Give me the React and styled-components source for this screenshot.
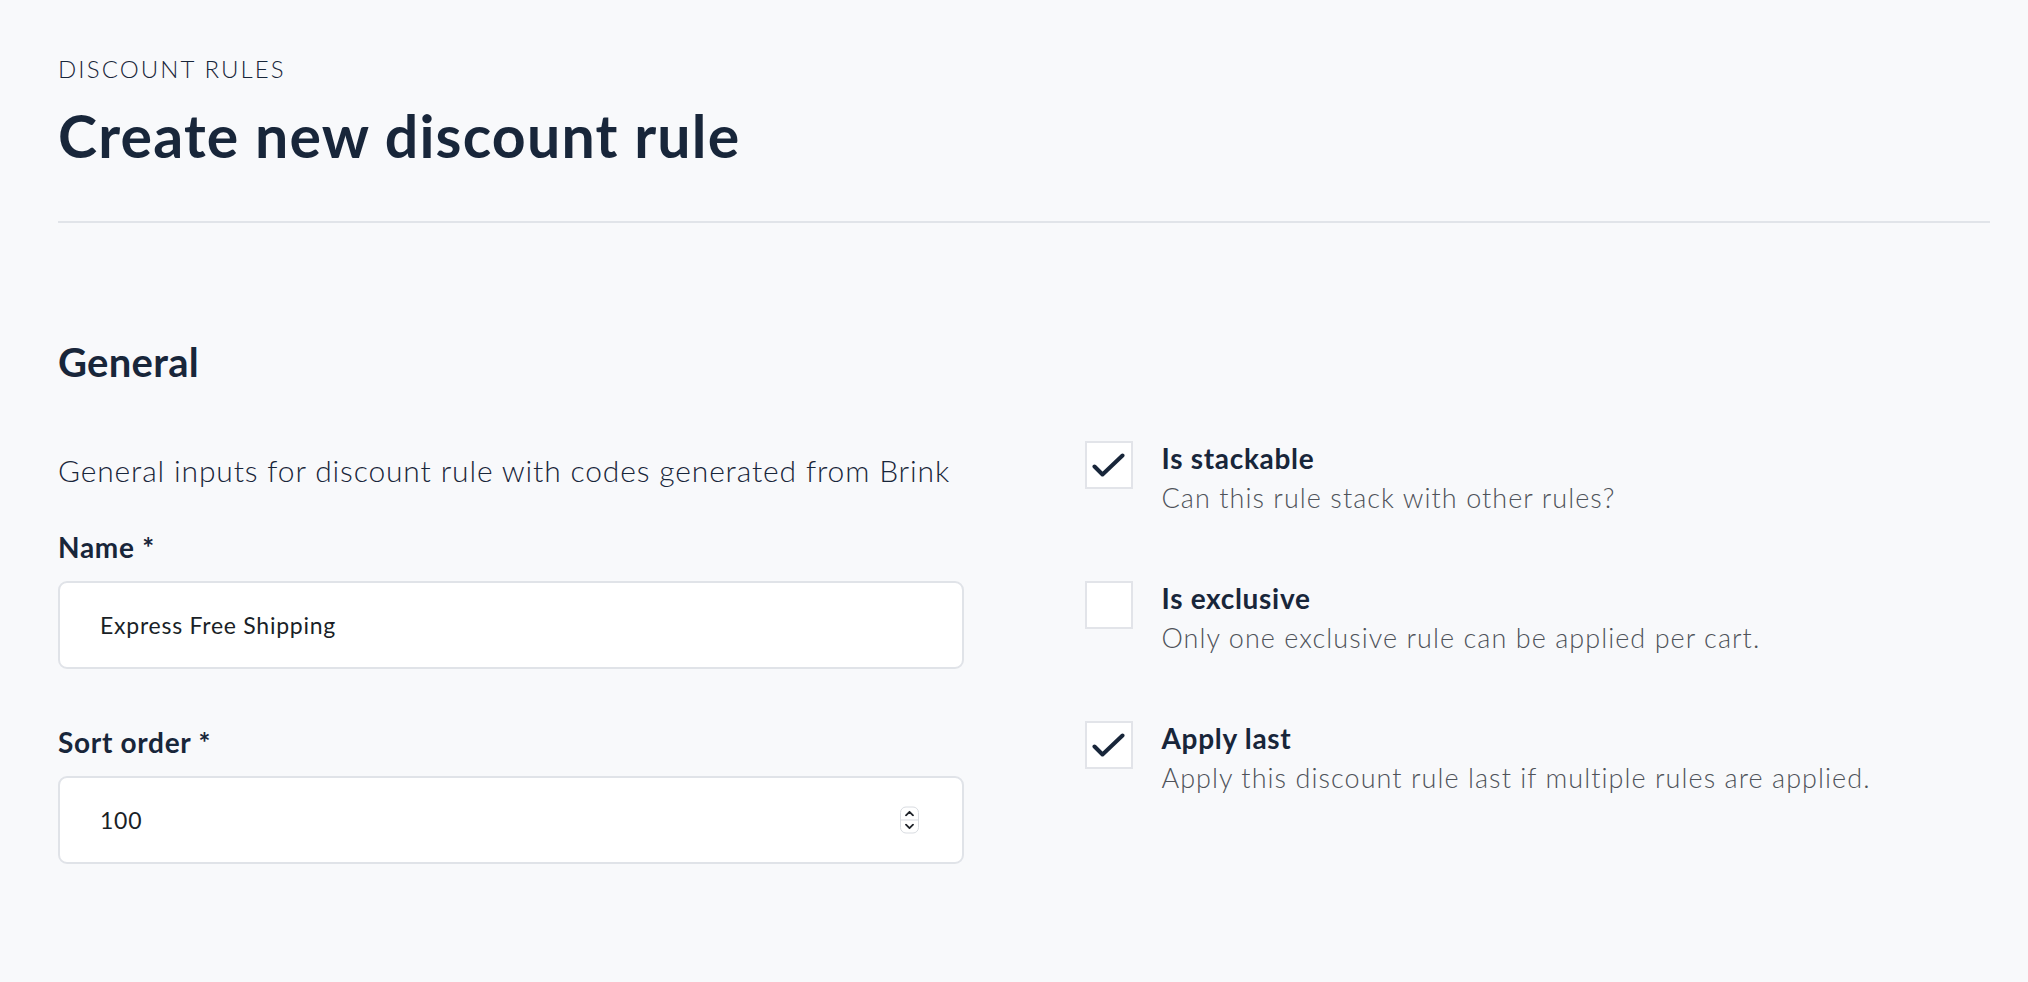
import React from 'react';
import styled, { createGlobalStyle } from 'styled-components';

const GlobalStyle = createGlobalStyle`
  html, body {
    margin: 0;
    padding: 0;
    background: #f8f9fb;
  }
  body {
    font-family: Lato, "Noto Sans", sans-serif;
    color: #18263a;
    -webkit-font-smoothing: antialiased;
  }
  * {
    box-sizing: border-box;
  }
`;

const Page = styled.div`
  min-height: 982px;
  padding: 0 38px 0 58px;
`;

const Header = styled.header`
  padding-top: 55px;
  padding-bottom: 52px;
  border-bottom: 2px solid #e1e4e9;
`;

const Breadcrumb = styled.div`
  font-size: 24px;
  font-weight: 300;
  letter-spacing: 2.1px;
  line-height: 28px;
  text-transform: uppercase;
`;

const Title = styled.h1`
  margin: 20px 0 0;
  font-size: 59px;
  font-weight: 700;
  letter-spacing: 1.2px;
  line-height: 66px;
`;

const Section = styled.section`
  padding-top: 115px;
`;

const SectionTitle = styled.h2`
  margin: 0 0 55px;
  font-size: 40px;
  font-weight: 700;
  letter-spacing: 0.3px;
  line-height: 48px;
`;

const Columns = styled.div`
  display: grid;
  grid-template-columns: 1fr 1fr;
  column-gap: 121px;
`;

const Column = styled.div`
  display: flex;
  flex-direction: column;
  padding-top: 9px;
`;

const Intro = styled.p`
  margin: 0 0 40px;
  font-size: 30px;
  font-weight: 300;
  letter-spacing: 0.85px;
  line-height: 40px;
`;

const Field = styled.div`
  display: flex;
  flex-direction: column;
  gap: 17px;
  margin-bottom: 56px;
`;

const Label = styled.label`
  font-size: 28px;
  font-weight: 700;
  letter-spacing: 0.7px;
  line-height: 34px;
`;

const InputWrap = styled.div`
  position: relative;
`;

const TextInput = styled.input`
  display: block;
  height: 88px;
  width: 100%;
  padding: 0 70px 0 40px;
  background: #fff;
  border: 2px solid #e0e3e8;
  border-radius: 9px;
  font-family: Lato, "Noto Sans", sans-serif;
  font-size: 23px;
  letter-spacing: 0.75px;
  color: #1a1f27;
  outline: none;
  -moz-appearance: textfield;

  &::-webkit-inner-spin-button,
  &::-webkit-outer-spin-button {
    -webkit-appearance: none;
    margin: 0;
  }
`;

const Spinner = styled.span`
  position: absolute;
  top: 50%;
  right: 45px;
  transform: translateY(-50%);
  width: 19px;
  height: 27px;
  display: flex;
  flex-direction: column;
  background: #fff;
  border: 1.5px solid #d9dce1;
  border-radius: 6px;
  overflow: hidden;
`;

const SpinHalf = styled.span`
  flex: 1;
  display: flex;
  align-items: center;
  justify-content: center;
  border-top: ${(p) => (p.down ? '1.5px solid #d9dce1' : 'none')};
`;

const CheckList = styled.div`
  display: flex;
  flex-direction: column;
  gap: 66px;
`;

const CheckRow = styled.label`
  display: flex;
  align-items: flex-start;
  gap: 29px;
`;

const Box = styled.span`
  flex: none;
  width: 48px;
  height: 48px;
  display: flex;
  align-items: center;
  justify-content: center;
  background: #fff;
  border: 2px solid #e2e4e9;
`;

const CheckText = styled.div`
  display: flex;
  flex-direction: column;
  gap: 6px;
`;

const CheckTitle = styled.span`
  font-size: 28px;
  font-weight: 700;
  letter-spacing: 0.7px;
  line-height: 34px;
`;

const CheckHint = styled.span`
  font-size: 27px;
  font-weight: 300;
  line-height: 34px;
  color: #4f535a;
  letter-spacing: 1.05px;
`;

const Tick = () => (
  <svg width="33" height="24" viewBox="0 0 33 24" fill="none">
    <path
      d="M2.5 13.5L10.5 21.5L30.5 2.5"
      stroke="#18263a"
      strokeWidth="4"
      strokeLinecap="round"
      strokeLinejoin="round"
    />
  </svg>
);

const Chevron = ({ down }) => (
  <svg width="9" height="6" viewBox="0 0 9 6" fill="none">
    <path
      d={down ? 'M1 1.2L4.5 4.7L8 1.2' : 'M1 4.8L4.5 1.3L8 4.8'}
      stroke="#1f2329"
      strokeWidth="1.8"
      strokeLinecap="round"
      strokeLinejoin="round"
    />
  </svg>
);

const options = [
  {
    title: 'Is stackable',
    hint: 'Can this rule stack with other rules?',
    checked: true,
  },
  {
    title: 'Is exclusive',
    hint: 'Only one exclusive rule can be applied per cart.',
    checked: false,
  },
  {
    title: 'Apply last',
    hint: 'Apply this discount rule last if multiple rules are applied.',
    checked: true,
  },
];

const App = () => (
  <Page>
    <GlobalStyle />
    <Header>
      <Breadcrumb>Discount rules</Breadcrumb>
      <Title>Create new discount rule</Title>
    </Header>
    <Section>
      <SectionTitle>General</SectionTitle>
      <Columns>
        <Column>
          <Intro>General inputs for discount rule with codes generated from Brink</Intro>
          <Field>
            <Label htmlFor="name">Name *</Label>
            <InputWrap>
              <TextInput id="name" type="text" defaultValue="Express Free Shipping" />
            </InputWrap>
          </Field>
          <Field>
            <Label htmlFor="sort">Sort order *</Label>
            <InputWrap>
              <TextInput id="sort" type="number" defaultValue="100" />
              <Spinner>
                <SpinHalf>
                  <Chevron />
                </SpinHalf>
                <SpinHalf down>
                  <Chevron down />
                </SpinHalf>
              </Spinner>
            </InputWrap>
          </Field>
        </Column>
        <CheckList>
          {options.map((item) => (
            <CheckRow key={item.title}>
              <Box>{item.checked && <Tick />}</Box>
              <CheckText>
                <CheckTitle>{item.title}</CheckTitle>
                <CheckHint>{item.hint}</CheckHint>
              </CheckText>
            </CheckRow>
          ))}
        </CheckList>
      </Columns>
    </Section>
  </Page>
);

export default App;
